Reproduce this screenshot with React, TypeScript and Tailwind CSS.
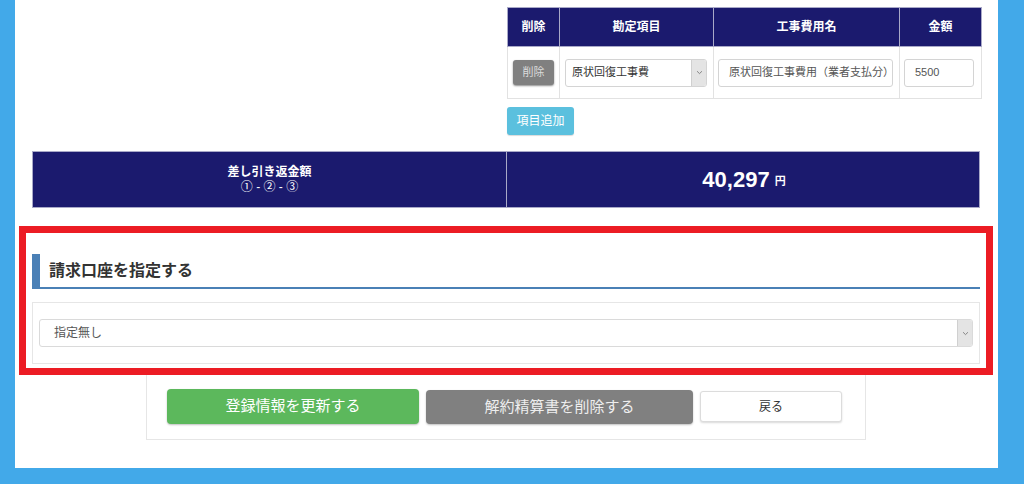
import React from "react";

const Chevron = ({ className = "" }: { className?: string }) => (
  <svg viewBox="0 0 10 6" className={className} fill="none" stroke="#7a7a7a" strokeWidth="1.3">
    <path d="M1.5 1.2 L5 4.6 L8.5 1.2" />
  </svg>
);

export default function App() {
  const font = {
    fontFamily: '"Liberation Sans", "Noto Sans CJK JP", sans-serif',
  };
  return (
    <div className="relative w-[1024px] h-[484px] overflow-hidden bg-[#42a9e9]" style={font}>
      <div className="ml-[15px] w-[983px] h-[468px] bg-white pl-[17px] pr-[18px] pt-[7px] flex flex-col">
        {/* top: table right half */}
        <div className="grid grid-cols-2">
          <div />
          <div className="pl-px">
            <table className="table-fixed border-collapse w-[474px]">
              <colgroup>
                <col className="w-[52px]" />
                <col className="w-[154px]" />
                <col className="w-[186px]" />
                <col className="w-[82px]" />
              </colgroup>
              <thead>
                <tr className="h-[39px] bg-[#1b1a6e] text-white text-[12px] font-bold">
                  <th className="border border-[#a9a9c8] font-bold">削除</th>
                  <th className="border border-[#a9a9c8] font-bold">勘定項目</th>
                  <th className="border border-[#a9a9c8] font-bold">工事費用名</th>
                  <th className="border border-[#a9a9c8] font-bold">金額</th>
                </tr>
              </thead>
              <tbody>
                <tr className="h-[52px]">
                  <td className="border border-[#e2e2e2] px-[5px]">
                    <div className="w-[41px] h-[25px] rounded-[3px] bg-[#808080] text-[#dcdcdc] text-[11px] flex items-center justify-center shadow-[0_1px_2px_rgba(0,0,0,0.45)]">
                      削除
                    </div>
                  </td>
                  <td className="border border-[#e2e2e2] px-[5px]">
                    <div className="h-[28px] w-[142px] border border-[#d4d4d4] rounded-[3px] flex items-center overflow-hidden">
                      <span className="flex-1 pl-[6px] text-[11px] text-[#333]">原状回復工事費</span>
                      <div className="w-[15px] h-full bg-[#e4e4e4] border-l border-[#d0d0d0] flex items-center justify-center">
                        <Chevron className="w-[7px] h-[5px]" />
                      </div>
                    </div>
                  </td>
                  <td className="border border-[#e2e2e2] px-[4px]">
                    <div className="h-[28px] w-[175px] border border-[#d4d4d4] rounded-[3px] flex items-center pl-[10px] text-[11px] text-[#555] whitespace-nowrap overflow-hidden">
                      原状回復工事費用（業者支払分）
                    </div>
                  </td>
                  <td className="border border-[#e2e2e2] px-[4px]">
                    <div className="h-[28px] w-[70px] border border-[#d4d4d4] rounded-[3px] flex items-center pl-[10px] text-[11px] text-[#555]">
                      5500
                    </div>
                  </td>
                </tr>
              </tbody>
            </table>
            <div className="mt-[8px] w-[67px] h-[28px] rounded-[3px] bg-[#5bc0de] text-white text-[12px] flex items-center justify-center shadow-[0_1px_1px_rgba(0,0,0,0.15)]">
              項目追加
            </div>
          </div>
        </div>

        {/* total row */}
        <div className="mt-[16px] grid grid-cols-[474px_474px] h-[57px] bg-[#1b1a6e] border border-[#a9a9c8] text-white">
          <div className="flex flex-col items-center justify-center text-[12px] font-bold leading-[15px] border-r border-[#a9a9c8]">
            <span>差し引き返金額</span>
            <span className="font-normal">① - ② - ③</span>
          </div>
          <div className="flex items-center justify-center font-bold">
            <span className="text-[22px] leading-none">40,297</span>
            <span className="text-[11px] ml-[5px] mt-[4px]">円</span>
          </div>
        </div>

        {/* heading */}
        <div className="mt-[46px] h-[35px] border-l-[8px] border-b-2 border-[#4a80b6] flex items-center pl-[9px] text-[16px] font-bold text-[#333]">
          請求口座を指定する
        </div>

        {/* select panel */}
        <div className="mt-[13px] h-[62px] border border-[#e6e6e6] px-[6px] pt-[16px]">
          <div className="h-[28px] border border-[#dadada] rounded-[3px] flex items-center overflow-hidden">
            <span className="flex-1 pl-[14px] text-[12px] text-[#555]">指定無し</span>
            <div className="w-[15px] h-full bg-[#e4e4e4] border-l border-[#d0d0d0] flex items-center justify-center">
              <Chevron className="w-[7px] h-[5px]" />
            </div>
          </div>
        </div>

        {/* button panel */}
        <div className="mt-[8px] mx-auto w-[720px] h-[68px] border border-[#e6e6e6] pl-[20px] pt-[16px] flex items-start gap-[7px]">
          <div className="w-[252px] h-[35px] rounded-[4px] bg-[#5cb85c] text-white text-[15px] flex items-center justify-center shadow-[0_1px_2px_rgba(0,0,0,0.25)]">
            登録情報を更新する
          </div>
          <div className="mt-px w-[267px] h-[34px] rounded-[4px] bg-[#808080] text-[#eeeeee] text-[15px] flex items-center justify-center shadow-[0_1px_2px_rgba(0,0,0,0.25)]">
            解約精算書を削除する
          </div>
          <div className="mt-[2px] w-[142px] h-[31px] rounded-[3px] bg-white border border-[#dcdcdc] text-[#333] text-[12px] flex items-center justify-center shadow-[0_1px_2px_rgba(0,0,0,0.15)]">
            戻る
          </div>
        </div>
      </div>

      {/* red annotation frame */}
      <div className="absolute left-[19px] top-[226px] w-[974px] h-[149px] border-[7px] border-[#ec1c24]" />
    </div>
  );
}
